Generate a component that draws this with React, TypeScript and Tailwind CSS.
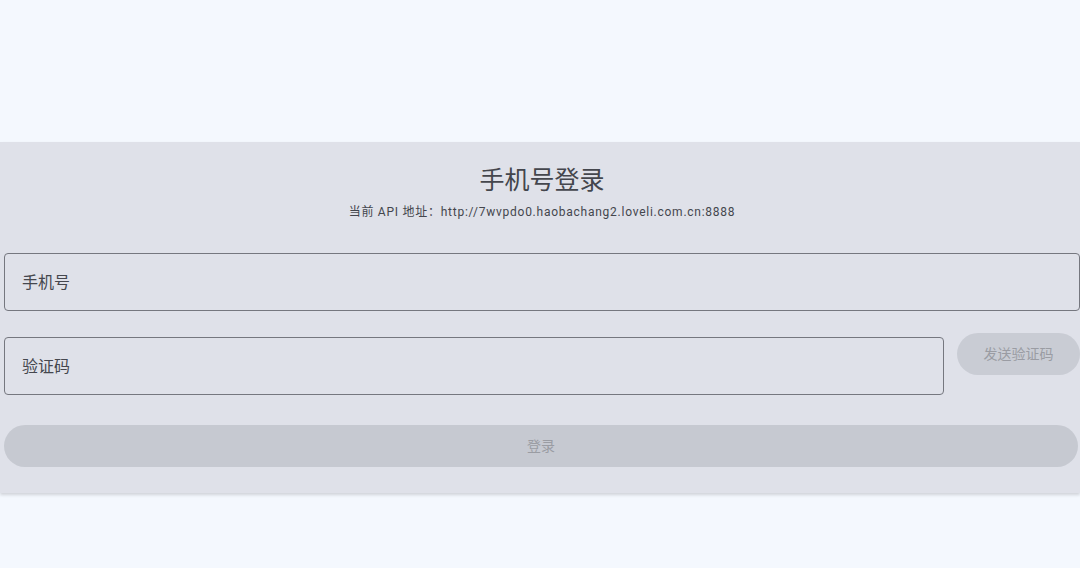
import React, { useState } from "react";

export default function App() {
  const [phone, setPhone] = useState("");
  const [code, setCode] = useState("");

  const font = { fontFamily: 'Roboto, "Noto Sans CJK SC", sans-serif' };

  return (
    <div className="min-h-[568px] w-full bg-[#f4f8fe] pt-[142px]" style={font}>
      {/* Login card */}
      <div className="w-full bg-[#dfe1e9] pb-[26px] pl-[4px] pr-0 pt-[22px] shadow-[0_2px_3px_rgba(0,0,0,0.15)]">
        <div className="flex flex-col items-center">
          <h1 className="text-[25px] leading-[33px] text-[#44464d]">手机号登录</h1>
          <p className="mt-[6px] text-[12px] leading-[18px] tracking-[0.75px] text-[#44464d]">
            当前 API 地址：http://7wvpdo0.haobachang2.loveli.com.cn:8888
          </p>
        </div>

        <div className="mt-[32px] flex flex-col">
          <input
            value={phone}
            onChange={(e) => setPhone(e.target.value)}
            placeholder="手机号"
            className="h-[58px] w-full rounded-[4px] border border-[#75777f] bg-transparent px-[17px] text-[16px] text-[#44464d] outline-none placeholder:text-[#45474e]"
          />

          <div className="mt-[26px] flex items-start">
            <input
              value={code}
              onChange={(e) => setCode(e.target.value)}
              placeholder="验证码"
              className="h-[58px] min-w-0 flex-1 rounded-[4px] border border-[#75777f] bg-transparent px-[17px] text-[16px] text-[#44464d] outline-none placeholder:text-[#45474e]"
            />
            <button
              disabled
              className="ml-[13px] -mt-[4px] h-[42px] w-[123px] shrink-0 rounded-full bg-[#c9ccd4] text-[14px] text-[#9a9ca3]"
            >
              发送验证码
            </button>
          </div>

          <button
            disabled
            className="mt-[30px] mr-[2px] h-[42px] rounded-full bg-[#c6c9d1] text-[14px] text-[#9a9ca3]"
          >
            登录
          </button>
        </div>
      </div>
    </div>
  );
}
